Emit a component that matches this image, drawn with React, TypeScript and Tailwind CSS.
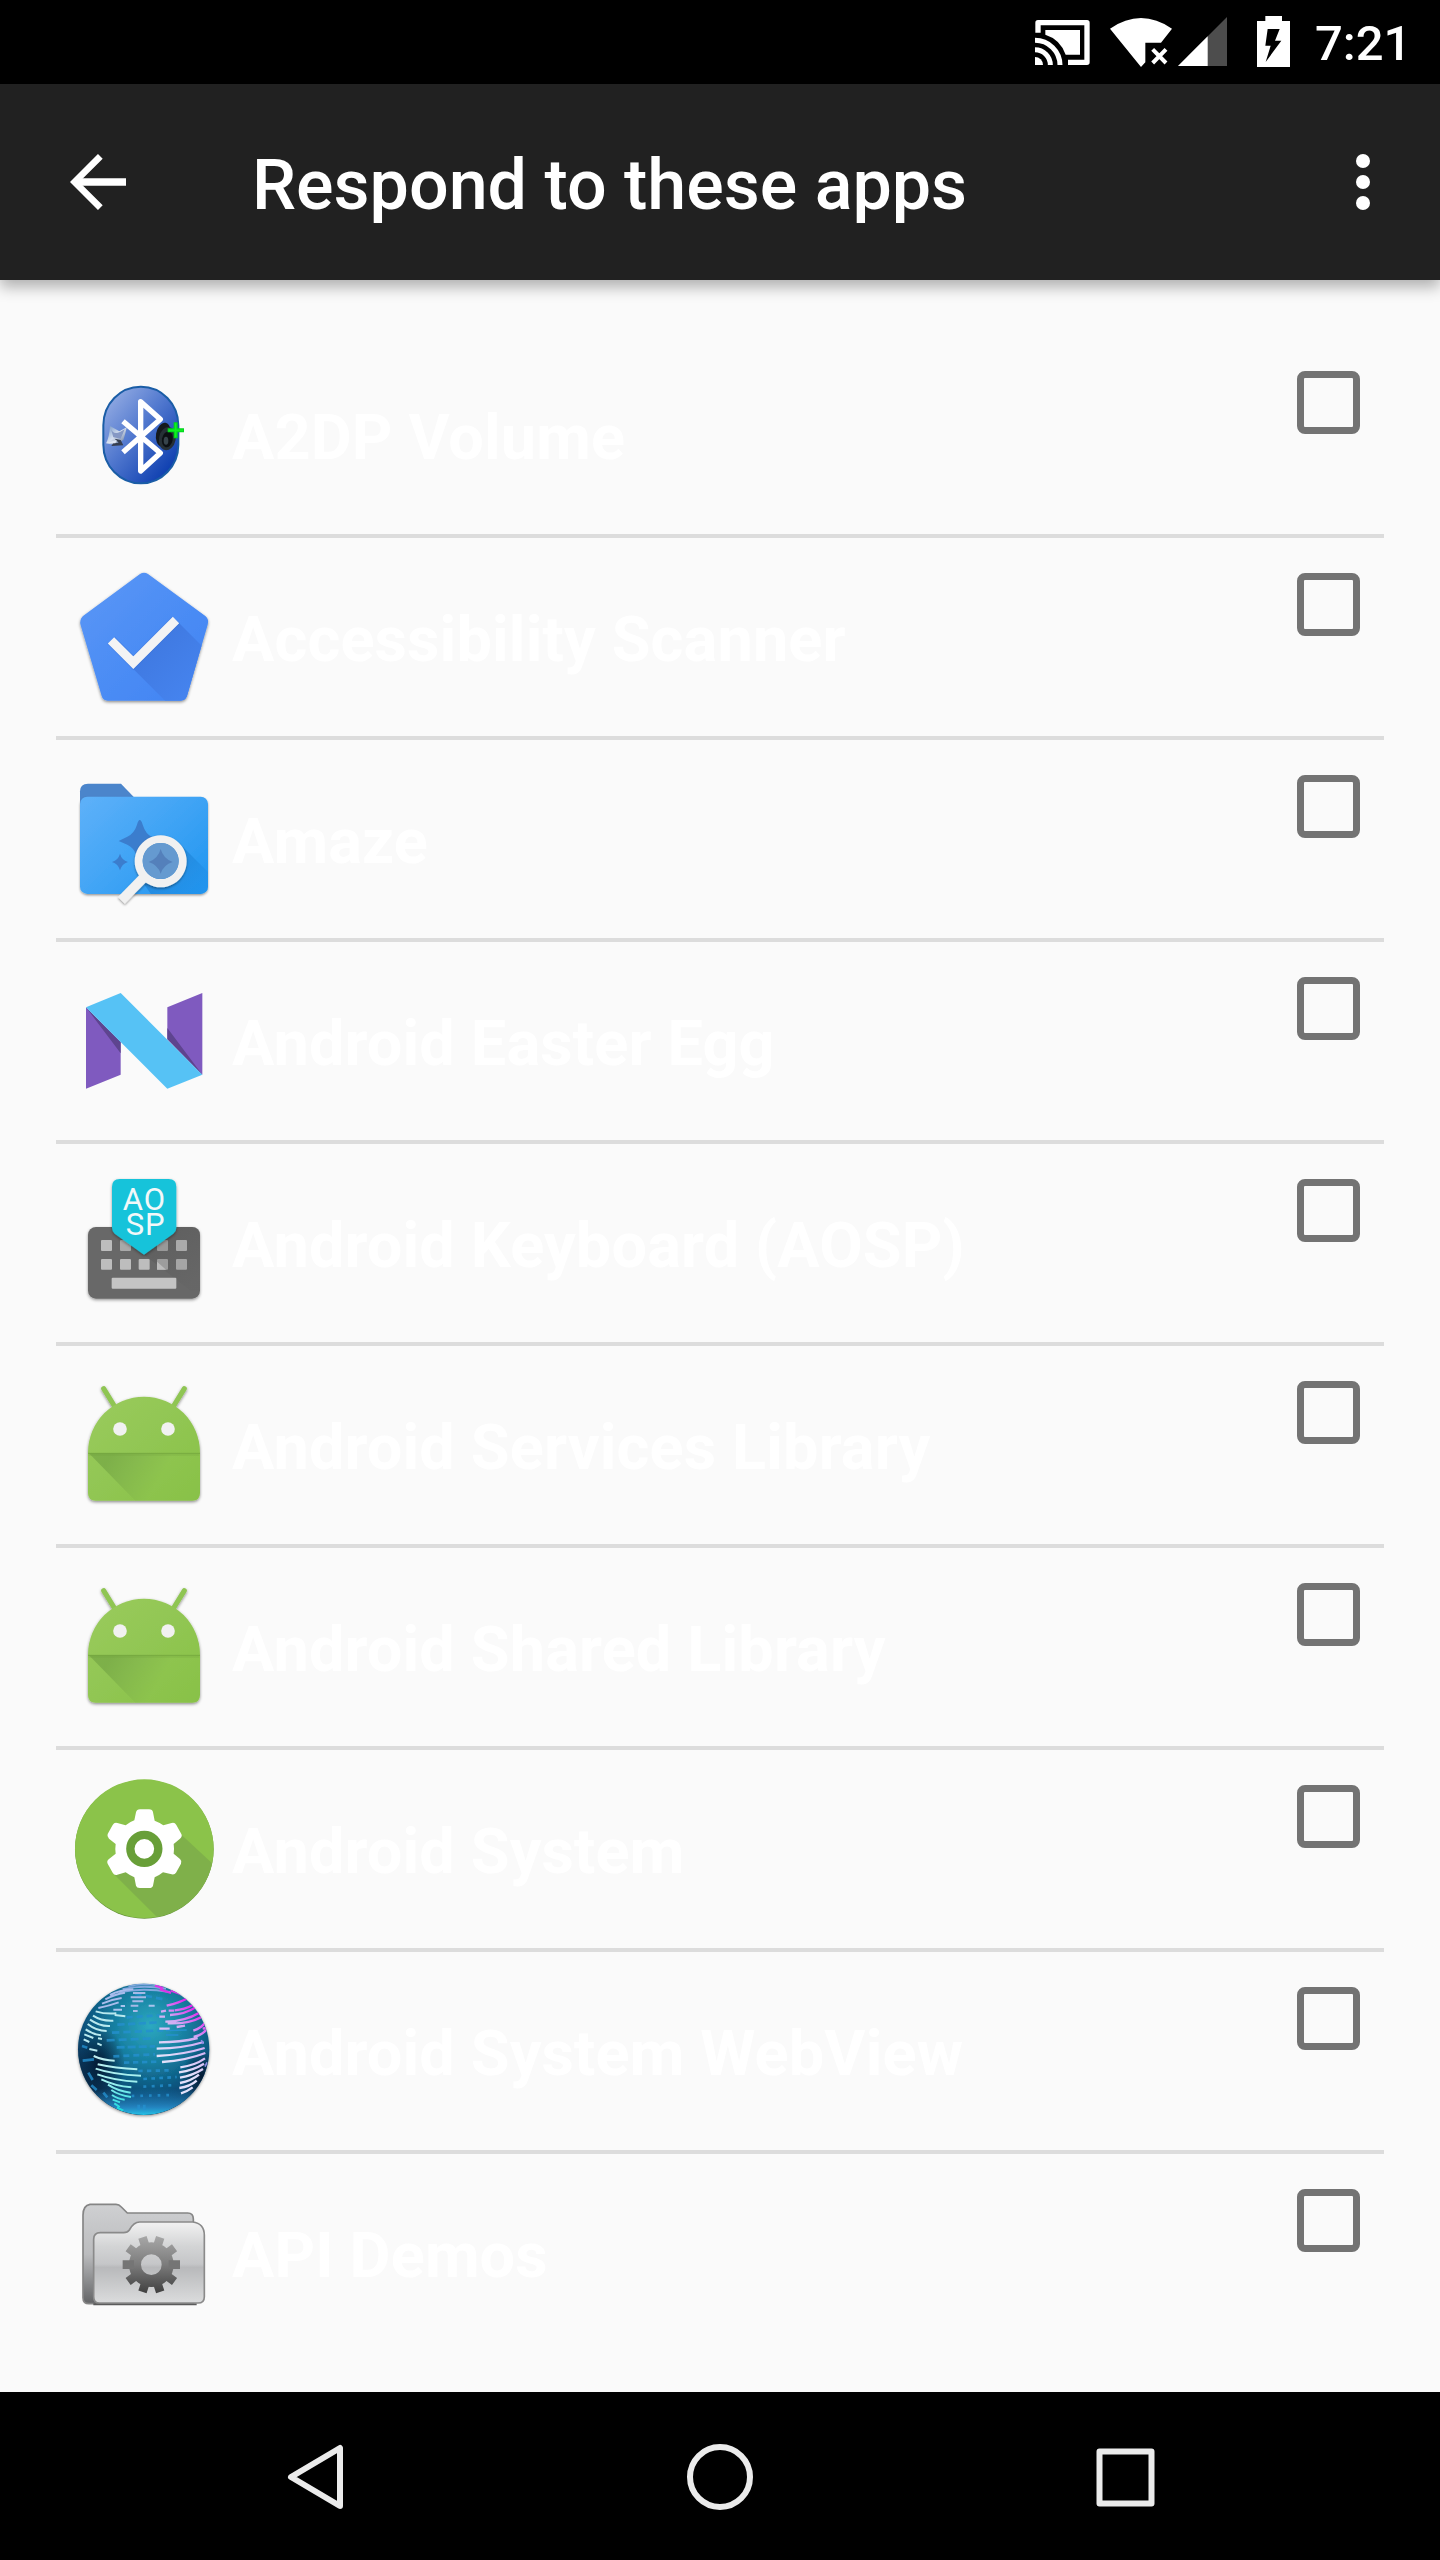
import React from "react";

function BluetoothIcon() {
  return (
    <svg className="size-36" viewBox="36 9 432 432">
      <defs>
        <linearGradient id="bt" x1="0.1" y1="0.1" x2="0.85" y2="0.9">
          <stop offset="0" stopColor="#90a9e2" />
          <stop offset="0.45" stopColor="#5279cf" />
          <stop offset="1" stopColor="#0e3fb0" />
        </linearGradient>
        <linearGradient id="dish" x1="0" y1="0" x2="1" y2="1">
          <stop offset="0" stopColor="#6f93c4" />
          <stop offset="0.5" stopColor="#d5dfef" />
          <stop offset="1" stopColor="#5a6f92" />
        </linearGradient>
      </defs>
      <rect x="130" y="80" width="225" height="290" rx="112" ry="116" fill="url(#bt)" stroke="#1a5da6" strokeWidth="6" />
      <path d="M150 198 Q148 232 138 250 Q160 258 190 240 Q198 215 200 202 L178 214 Z" fill="url(#dish)" />
      <path d="M152 204 Q160 232 194 208 L182 236 L160 232 Z" fill="#8598c4" />
      <path d="M164 236 L182 240 L190 256 L154 258 L160 250 L176 248 Z" fill="#363e50" />
      <path d="M140 248 L170 240 L166 250 Z" fill="#dfe6f3" />
      <path d="M189 184 L301 279 L242 333 V125 L301 178 L189 277" fill="none" stroke="#fff" strokeWidth="16" strokeLinejoin="round" />
      <ellipse cx="310" cy="224" rx="22" ry="36" fill="#15191d" transform="rotate(10 310 224)" />
      <ellipse cx="322" cy="236" rx="25" ry="35" fill="#263036" transform="rotate(12 322 236)" />
      <ellipse cx="322" cy="238" rx="16" ry="24" fill="#0c1013" transform="rotate(12 322 238)" />
      <ellipse cx="318" cy="242" rx="7" ry="12" fill="#37444b" />
      <path d="M347 187 V235 M323 211 H372" stroke="#00d51e" strokeWidth="12" />
      <path d="M347 190 V232 M326 211 H369" stroke="#10f020" strokeWidth="5" />
    </svg>
  );
}

function ScannerIcon() {
  return (
    <svg className="size-36" viewBox="36 15 432 432">
      <defs>
        <linearGradient id="pent" x1="0" y1="0" x2="1" y2="1">
          <stop offset="0" stopColor="#5a97f6" />
          <stop offset="1" stopColor="#3f83f3" />
        </linearGradient>
        <linearGradient id="pshade" gradientUnits="userSpaceOnUse" x1="270" y1="270" x2="390" y2="390">
          <stop offset="0" stopColor="#407ae2" />
          <stop offset="1" stopColor="#4583ee" />
        </linearGradient>
        <filter id="soft" x="-10%" y="-10%" width="120%" height="125%">
          <feDropShadow dx="0" dy="4" stdDeviation="4" floodColor="#000" floodOpacity="0.45" />
        </filter>
        <clipPath id="pentclip">
          <path d="M240 42 Q252 35 264 42 L436 168 Q448 178 443 194 L381 408 Q376 422 362 422 H143 Q129 422 125 408 L62 196 Q57 180 69 168 Z" />
        </clipPath>
      </defs>
      <path filter="url(#soft)" fill="url(#pent)" d="M240 42 Q252 35 264 42 L436 168 Q448 178 443 194 L381 408 Q376 422 362 422 H143 Q129 422 125 408 L62 196 Q57 180 69 168 Z" />
      <path clipPath="url(#pentclip)" fill="url(#pshade)" d="M220 327 L357 189 L540 372 L400 507 Z" />
      <path d="M153 241 L220 308 L348 180" fill="none" stroke="#2c61c4" strokeOpacity="0.25" strokeWidth="32" />
      <path d="M153 241 L220 308 L348 180" fill="none" stroke="#f3f3f4" strokeWidth="27" />
    </svg>
  );
}

function AmazeIcon() {
  return (
    <svg className="size-36" viewBox="36 21 432 432">
      <defs>
        <linearGradient id="fold" x1="0" y1="0.1" x2="1" y2="0.9">
          <stop offset="0" stopColor="#5cb0f9" />
          <stop offset="0.5" stopColor="#40a4f5" />
          <stop offset="1" stopColor="#2196f0" />
        </linearGradient>
        <linearGradient id="lens" gradientUnits="userSpaceOnUse" x1="320" y1="300" x2="420" y2="400">
          <stop offset="0" stopColor="#1d80d2" stopOpacity="0.75" />
          <stop offset="1" stopColor="#2090ea" stopOpacity="0.4" />
        </linearGradient>
        <filter id="soft2" x="-10%" y="-10%" width="120%" height="125%">
          <feDropShadow dx="0" dy="4" stdDeviation="3" floodColor="#000" floodOpacity="0.4" />
        </filter>
        <clipPath id="foldclip"><rect x="60" y="110" width="384" height="292" rx="22" /></clipPath>
      </defs>
      <path d="M60 150 V94 Q60 71 84 71 H183 L222 112 V150 Z" fill="#4b85cb" />
      <rect x="60" y="110" width="384" height="292" rx="22" fill="url(#fold)" filter="url(#soft2)" />
      <path clipPath="url(#foldclip)" d="M356 248 L490 382 V440 H300 L250 370 Z" fill="url(#lens)" />
      <path d="M239 180 Q244 180 248 194 Q257 222 276 231 L302 242 L276 253 Q256 262 247 290 Q239 316 231 290 Q223 263 202 254 L176 243 L202 230 Q223 220 231 194 Q235 180 239 180 Z" fill="#3b7dcd" />
      <path d="M180 281 Q185 300 204 306 Q185 312 180 331 Q175 312 156 306 Q175 300 180 281 Z" fill="#3b7dcd" />
      <g filter="url(#soft2)">
        <path d="M250 354 L184 421" stroke="#f1f1f1" strokeWidth="29" />
        <path fillRule="evenodd" d="M302 226 a78 78 0 1 0 .1 0 Z M302 249 a54 54 0 1 1 -.1 0 Z" fill="#f1f1f1" />
      </g>
      <circle cx="302" cy="303" r="54" fill="#659ad0" />
      <path d="M302 267 Q310 296 338 306 Q310 315 302 341 Q294 315 266 306 Q294 296 302 267 Z" fill="#5480bb" />
    </svg>
  );
}

function NougatIcon() {
  return (
    <svg className="size-36" viewBox="36 -3 432 432">
      <path d="M78 112 L182 216 V314 L78 356 Z M322 112 L427 69 V314 L322 208 Z" fill="#7f5abf" />
      <path d="M78 112 L182 216 V250 Z M322 174 L427 314 L322 208 Z" fill="#5e448f" />
      <path d="M78 112 L182 69 L427 314 L322 356 Z" fill="#56c2f5" />
    </svg>
  );
}

function KeyboardIcon() {
  return (
    <svg className="size-36" viewBox="36 33 432 432">
      <defs>
        <linearGradient id="kshade" x1="0" y1="0" x2="1" y2="1">
          <stop offset="0" stopColor="#4d4d4d" />
          <stop offset="0.9" stopColor="#646464" />
        </linearGradient>
        <filter id="soft3" x="-10%" y="-10%" width="120%" height="125%">
          <feDropShadow dx="0" dy="4" stdDeviation="4" floodColor="#000" floodOpacity="0.4" />
        </filter>
      </defs>
      <rect x="84" y="201" width="336" height="215" rx="24" fill="#686868" filter="url(#soft3)" />
      <path d="M156 213 L252 284 L392 392 L420 390 V225 Q420 201 396 201 H156 Z" fill="url(#kshade)" fillOpacity="0.45" />
      <g fill="#bdbdbd">
        <rect x="123" y="240" width="33" height="33" rx="3" />
        <rect x="180" y="240" width="33" height="33" rx="3" fill="#a9a9a9" />
        <rect x="291" y="240" width="33" height="33" rx="3" fill="#999" />
        <rect x="348" y="240" width="33" height="33" rx="3" fill="#aaa" />
        <rect x="123" y="297" width="33" height="32" rx="3" />
        <rect x="180" y="297" width="33" height="32" rx="3" />
        <rect x="236" y="297" width="33" height="32" rx="3" />
        <rect x="291" y="297" width="33" height="32" rx="3" fill="#9d9d9d" />
        <rect x="348" y="297" width="33" height="32" rx="3" fill="#a5a5a5" />
        <rect x="155" y="353" width="194" height="33" rx="3" fill="#c4c4c4" />
      </g>
      <path d="M291 305 L318 329 H291 Z" fill="#bdbdbd" />
      <path filter="url(#soft3)" d="M179 57 H326 Q349 57 349 80 V203 Q349 214 340 221 L252 284 L164 221 Q156 214 156 203 V80 Q156 57 179 57 Z" fill="#19c3da" />
      <g fill="#f2f8f9" textAnchor="middle" fontFamily="Roboto, sans-serif" fontSize="93">
        <text x="253" y="150" letterSpacing="3">AO</text>
        <text x="257" y="226" letterSpacing="3">SP</text>
      </g>
    </svg>
  );
}

function RobotIcon() {
  return (
    <svg className="size-36" viewBox="36 39 432 432">
      <defs>
        <linearGradient id="rob" x1="0" y1="0" x2="1" y2="1">
          <stop offset="0" stopColor="#9acb5e" />
          <stop offset="1" stopColor="#88c147" />
        </linearGradient>
        <linearGradient id="rfade" gradientUnits="userSpaceOnUse" x1="150" y1="290" x2="290" y2="370">
          <stop offset="0" stopColor="#76a845" stopOpacity="0.75" />
          <stop offset="1" stopColor="#76a845" stopOpacity="0" />
        </linearGradient>
        <filter id="soft4" x="-10%" y="-10%" width="120%" height="125%">
          <feDropShadow dx="0" dy="4" stdDeviation="4" floodColor="#000" floodOpacity="0.45" />
        </filter>
      </defs>
      <g filter="url(#soft4)">
        <path d="M131 86 L165 141 M373 86 L339 141" stroke="#8fc552" strokeWidth="15" strokeLinecap="round" />
        <path d="M84 278 A168 168 0 0 1 420 278 V399 Q420 422 397 422 H107 Q84 422 84 399 Z" fill="url(#rob)" />
      </g>
      <path d="M87 280 H400 V422 H226 Z" fill="url(#rfade)" />
      <path d="M84 280 H420" stroke="#6f9f3d" strokeOpacity="0.7" strokeWidth="3" />
      <path d="M86 284 H418" stroke="#6f9f3d" strokeOpacity="0.25" strokeWidth="6" />
      <circle cx="180" cy="207" r="20.5" fill="#f1f1f1" />
      <circle cx="324" cy="207" r="20.5" fill="#f1f1f1" />
    </svg>
  );
}

function SystemIcon() {
  return (
    <svg className="size-36" viewBox="36 51 432 432">
      <defs>
        <clipPath id="sysclip"><circle cx="253" cy="266" r="208" /></clipPath>
      </defs>
      <circle cx="253" cy="268" r="208" fill="#659339" />
      <circle cx="253" cy="266" r="208" fill="#8bc34a" />
      <path clipPath="url(#sysclip)" d="M162 343 L365 225 L500 350 V500 H320 Z" fill="#7fb04a" />
      <path d="M240 148 H267 Q278 148 279 157 L284 182 Q302 189 310 196 L335 189 Q344 186 349 195 L364 222 Q368 229 360 236 L341 252 Q343 266 341 281 L360 297 Q366 302 363 311 L348 338 Q344 345 335 343 L309 337 Q298 346 284 352 L279 377 Q277 384 267 384 H239 Q230 384 228 377 L223 352 Q206 344 197 337 L172 344 Q163 347 158 338 L143 311 Q139 303 147 297 L167 281 Q165 265 167 252 L147 236 Q140 229 143 222 L158 195 Q163 186 172 189 L197 196 Q209 186 223 181 L228 157 Q230 148 240 148 Z" fill="#fff" />
      <circle cx="253" cy="266.500" r="42" fill="none" stroke="#689f38" strokeWidth="25" />
    </svg>
  );
}

const oceanRows: [number, number, number, number, string][] = [
  [200, 172, 300, 166, "18 12"], [172, 194, 300, 187, "22 10"], [156, 218, 310, 211, "22 12"],
  [140, 241, 285, 235, "24 12"], [170, 262, 285, 259, "24 9"], [160, 289, 285, 283, "18 12"],
  [192, 308, 300, 305, "16 11"], [235, 333, 330, 331, "13 13"], [250, 357, 350, 351, "11 13"],
  [250, 380, 350, 375, "9 16"], [215, 408, 340, 405, "8 18"], [225, 101, 310, 118, "20 12"],
];

function WebViewIcon() {
  return (
    <svg className="size-36" viewBox="36 57 432 432">
      <defs>
        <radialGradient id="sea" cx="0.55" cy="0.32" r="0.72">
          <stop offset="0" stopColor="#2ca9c0" />
          <stop offset="0.4" stopColor="#167d9f" />
          <stop offset="0.75" stopColor="#0a4b76" />
          <stop offset="1" stopColor="#06243f" />
        </radialGradient>
        <linearGradient id="glow" x1="0" y1="0" x2="0" y2="1">
          <stop offset="0.8" stopColor="#1d88c8" stopOpacity="0" />
          <stop offset="0.94" stopColor="#2790d0" stopOpacity="0.85" />
          <stop offset="1" stopColor="#25c3e8" />
        </linearGradient>
        <linearGradient id="america" gradientUnits="userSpaceOnUse" x1="0" y1="280" x2="0" y2="450">
          <stop offset="0" stopColor="#c4eef2" />
          <stop offset="0.5" stopColor="#a0f0ee" />
          <stop offset="1" stopColor="#18d9df" />
        </linearGradient>
        <linearGradient id="africa" gradientUnits="userSpaceOnUse" x1="320" y1="290" x2="425" y2="160">
          <stop offset="0" stopColor="#e2e0fa" />
          <stop offset="0.6" stopColor="#cfa9f3" />
          <stop offset="1" stopColor="#e724ee" />
        </linearGradient>
        <radialGradient id="dark"><stop offset="0" stopColor="#031a33" /><stop offset="1" stopColor="#031a33" stopOpacity="0" /></radialGradient>
        <filter id="soft5" x="-10%" y="-10%" width="120%" height="125%">
          <feDropShadow dx="0" dy="3" stdDeviation="5" floodColor="#000" floodOpacity="0.45" />
        </filter>
        <clipPath id="globe"><circle cx="251" cy="268" r="197" /></clipPath>
      </defs>
      <circle cx="251" cy="268" r="197" fill="url(#sea)" filter="url(#soft5)" />
      <g clipPath="url(#globe)" fill="none">
        <ellipse cx="115" cy="315" rx="80" ry="120" fill="url(#dark)" />
        <ellipse cx="425" cy="350" rx="60" ry="80" fill="url(#dark)" />
        <circle cx="251" cy="268" r="197" fill="url(#glow)" />
        <g stroke="#2590cf" strokeWidth="8" opacity="0.8">
          {oceanRows.map(([x1, y1, x2, y2, dash]) => (
            <path key={y1} d={`M${x1} ${y1} L${x2} ${y2}`} strokeDasharray={dash} />
          ))}
          <path d="M68 302 L102 298 M85 338 L98 360 M130 398 L142 412 M66 258 L82 263 M94 376 L110 390 M236 434 V450 M253 434 V450" />
        </g>
        <g stroke="#a9bcec" strokeWidth="6">
          <path d="M205 78 Q245 68 295 76 M188 88 Q245 74 318 86 M178 97 Q245 82 330 96" stroke="#82a8df" />
          <path d="M150 105 Q180 90 220 88 M136 118 Q163 103 195 98 M126 131 Q155 118 185 114 M115 144 Q148 137 176 127" />
          <path d="M219 99 H256 M212 112 H258 M217 124 H250 M212 137 H235 M219 153 H233" stroke="#a6b9e7" />
          <path d="M266 137 H284 M182 138 H195 M160 149 H186" stroke="#a9c4ee" />
        </g>
        <g stroke="url(#america)" strokeWidth="6">
          <path d="M107 154 Q136 163 169 160 M99 167 Q125 184 160 182 M90 179 Q120 200 150 198 M83 192 Q109 213 140 213 M77 208 Q98 223 123 226 M73 223 L100 234 M71 238 L88 246 M164 165 L196 169 M114 235 L126 237 M88 267 L112 272 M112 250 L125 256" stroke="#b9e9ef" />
          <path d="M101 288 Q130 301 164 302 M113 313 Q165 325 232 328 M107 326 Q160 344 243 347 M112 343 Q165 362 232 365 M124 358 Q165 378 214 382 M144 374 Q172 393 212 398 M154 390 Q175 405 213 411 M156 405 Q173 417 194 419 M158 419 L180 427 M163 430 L179 441 M171 443 L190 452" />
        </g>
        <g stroke="url(#africa)" strokeWidth="7">
          <path d="M285 77 L310 84 M299 88 L333 99 M332 91 L365 103" stroke="#db35e7" />
          <path d="M320 137 Q360 127 380 116 M344 151 Q375 149 397 136 M330 165 Q378 162 405 143 M316 185 Q375 184 418 158 M323 190 Q385 193 425 171 M400 212 Q425 204 435 188" />
          <path d="M298 170 H315 M303 155 L318 152 M298 206 H329 M326 152 H342 M350 201 L375 197 M428 206 L437 204 M401 231 Q425 226 438 210" />
          <path d="M297 247 Q360 247 413 234 M290 266 Q370 265 431 246 M290 288 Q370 284 434 264 M306 306 Q380 301 436 279 M361 322 Q405 316 435 295 M357 337 Q400 331 432 311 M360 353 Q397 347 429 327 M360 369 Q395 362 417 344 M358 384 Q390 380 410 362 M363 400 Q382 394 398 382" />
          <path d="M318 225 H355 M318 212 L380 210" stroke="#2590cf" strokeWidth="4" />
          <path d="M424 240 L430 252 M435 320 L441 307" stroke="#8d8ce5" strokeWidth="5" />
        </g>
      </g>
    </svg>
  );
}

function ApiIcon() {
  return (
    <svg className="size-36" viewBox="36 3 432 432">
      <defs>
        <linearGradient id="back" x1="0" y1="0" x2="0" y2="1">
          <stop offset="0" stopColor="#cfd0d2" />
          <stop offset="0.5" stopColor="#bbbcbe" />
          <stop offset="1" stopColor="#636466" />
        </linearGradient>
        <linearGradient id="front" x1="0" y1="0" x2="0" y2="1">
          <stop offset="0" stopColor="#f2f2f2" />
          <stop offset="0.3" stopColor="#d3d4d5" />
          <stop offset="0.52" stopColor="#c5c6c8" />
          <stop offset="0.56" stopColor="#b8b9bb" />
          <stop offset="1" stopColor="#dbdcdd" />
        </linearGradient>
        <linearGradient id="cog" gradientUnits="userSpaceOnUse" x1="0" y1="165" x2="0" y2="342">
          <stop offset="0" stopColor="#a9a9a9" />
          <stop offset="0.5" stopColor="#7c7c7c" />
          <stop offset="1" stopColor="#3e3e3e" />
        </linearGradient>
      </defs>
      <path d="M90 73 H168 Q177 73 184 81 L202 99 H383 Q400 99 400 117 V371 H87 Q69 371 69 353 V106 Q69 76 90 73 Z" fill="url(#back)" stroke="#858585" strokeWidth="5" />
      <path d="M100 373 H410" stroke="#5b5b5b" strokeWidth="6" />
      <path d="M121 158 H191 Q203 158 208 150 Q221 126 239 126 H398 Q433 130 433 166 V350 Q433 369 414 369 H119 Q101 369 101 350 V178 Q101 158 121 158 Z" fill="url(#front)" stroke="#8a8a8a" strokeWidth="5" />
      <g stroke="url(#cog)" fill="none">
        <circle cx="274" cy="254" r="49" strokeWidth="36" />
        <g strokeWidth="26">
          <path d="M188 254 H222 M326 254 H360" stroke="#757575" />
          <path d="M204.400 203.500 L231.900 223.500 M343.600 203.500 L316.100 223.500" />
          <path d="M247.400 172.200 L257.900 204.500 M300.600 172.200 L290.100 204.500" />
          <path d="M204.400 304.500 L231.900 284.500 M343.600 304.500 L316.100 284.500" />
          <path d="M247.400 335.800 L257.900 303.500 M300.600 335.800 L290.100 303.500" />
        </g>
      </g>
    </svg>
  );
}

const apps: { name: string; Icon: () => React.ReactElement }[] = [
  { name: "A2DP Volume", Icon: BluetoothIcon },
  { name: "Accessibility Scanner", Icon: ScannerIcon },
  { name: "Amaze", Icon: AmazeIcon },
  { name: "Android Easter Egg", Icon: NougatIcon },
  { name: "Android Keyboard (AOSP)", Icon: KeyboardIcon },
  { name: "Android Services Library", Icon: RobotIcon },
  { name: "Android Shared Library", Icon: RobotIcon },
  { name: "Android System", Icon: SystemIcon },
  { name: "Android System WebView", Icon: WebViewIcon },
  { name: "API Demos", Icon: ApiIcon },
];

function StatusBar() {
  return (
    <div className="flex h-[84px] items-start justify-end bg-black pr-[33px] pt-4 text-white">
      <svg className="h-[51px] w-[55px]" viewBox="45 48 165 153" fill="none">
        <path d="M54 98 V68 H201 V187 H144" stroke="#fff" strokeWidth="16" strokeLinejoin="round" />
        <path d="M76 90 H180 V164 H137 Q121 118 76 104 Z" fill="#fff" />
        <path d="M45 171 A24 24 0 0 1 69 195 H45 Z" fill="#fff" />
        <path d="M45 149 A46 46 0 0 1 91 195 M45 121 A75 75 0 0 1 120 195" stroke="#fff" strokeWidth="15" />
      </svg>
      <svg className="ml-5 h-[51px] w-[62px]" viewBox="270 48 186 153">
        <path d="M270 86 Q363 22 456 86 L423 128 H376 V187 L363 201 Z" fill="#fff" />
        <path d="M398 148 L438 189 M438 148 L398 189" stroke="#fff" strokeWidth="12" />
      </svg>
      <svg className="ml-1.5 h-[51px] w-[49px]" viewBox="474 48 147 153">
        <path d="M621 51 V198 H474 Z" fill="#4d4d4d" />
        <path d="M563 109 V198 H474 Z" fill="#fff" />
      </svg>
      <svg className="ml-[30px] h-[51px] w-[33px]" viewBox="711 48 99 153">
        <path d="M736 48 H786 V63 H810 V201 H711 V63 H736 Z" fill="#fff" />
        <path d="M743 87 H779 L765 122 H784 L737 186 L752 137 H736 Z" fill="#000" />
      </svg>
      <span className="ml-[25px] w-[92px] whitespace-nowrap text-[49px] font-medium leading-[56px]">7:21</span>
    </div>
  );
}

function AppBar() {
  return (
    <header className="relative z-10 flex h-[196px] items-center bg-[#212121] pl-[70px] pr-[70px] text-white shadow-[0_7px_14px_rgba(0,0,0,0.3)]">
      <svg className="h-14 w-14" viewBox="0 0 168 168" fill="none" stroke="#fff">
        <path d="M91 7 L14 84 L91 161" strokeWidth="20" />
        <path d="M20 84 H168" strokeWidth="22" />
      </svg>
      <h1 className="ml-[126px] mt-1.5 flex-1 whitespace-nowrap text-[70px] font-medium leading-[82px]">
        Respond to these apps
      </h1>
      <svg className="h-14 w-[14px]" viewBox="0 0 14 56" fill="#fff">
        <circle cx="7" cy="7" r="7" />
        <circle cx="7" cy="28" r="7" />
        <circle cx="7" cy="49" r="7" />
      </svg>
    </header>
  );
}

export default function App() {
  return (
    <div className="flex h-[2560px] w-[1440px] flex-col overflow-hidden bg-[#fafafa] font-['Roboto',sans-serif]">
      <StatusBar />
      <AppBar />
      <ul className="mx-14 mt-14 flex-1 divide-y-4 divide-[#dcdcdc]">
        {apps.map(({ name, Icon }) => (
          <li key={name} className="flex h-[202px] items-center pl-4 last:h-[198px]">
            <Icon />
            <span className="ml-4 mt-1.5 flex-1 whitespace-nowrap text-[63px] font-bold leading-[74px] tracking-[0.15px] text-white">{name}</span>
            <span className="mr-6 mt-[35px] size-[63px] self-start rounded-lg border-[7px] border-[#737373]" />
          </li>
        ))}
      </ul>
      <nav className="flex h-[168px] items-center bg-black pl-[283px] pt-0.5">
        <svg className="h-[70px] w-[70px]" viewBox="0 0 70 70" fill="none" stroke="#ebebeb" strokeWidth="6" strokeLinejoin="round">
          <path d="M57 6 V64 L8 35 Z" />
        </svg>
        <svg className="ml-[332px] h-[70px] w-[70px]" viewBox="0 0 70 70" fill="none" stroke="#ebebeb" strokeWidth="6">
          <circle cx="35" cy="35" r="30" />
        </svg>
        <svg className="ml-[335px] h-[70px] w-[70px]" viewBox="0 0 70 70" fill="none" stroke="#ebebeb" strokeWidth="6" strokeLinejoin="round">
          <rect x="9.500" y="9.500" width="52" height="52" />
        </svg>
      </nav>
    </div>
  );
}
